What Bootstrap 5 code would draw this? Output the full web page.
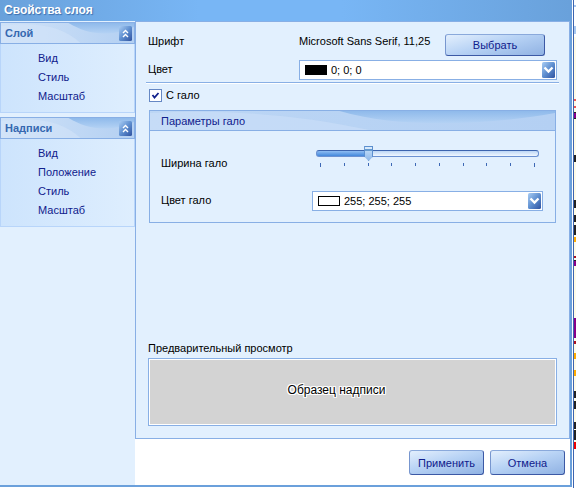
<!DOCTYPE html>
<html lang="ru">
<head>
<meta charset="utf-8">
<meta name="viewport" content="width=device-width, initial-scale=1">
<title>Свойства слоя</title>
<link href="https://cdn.jsdelivr.net/npm/bootstrap@5.3.0/dist/css/bootstrap.min.css" rel="stylesheet">
<style>
:root{--line:#88afe5;--frame:#6ba0db;--panel:#e2f0fe;--navy:#10208c}
body{font-family:"Liberation Sans",Arial,sans-serif;font-size:11px;line-height:19px;color:#000;background:#fff}
.dialog{border-right:2px solid var(--frame);border-bottom:2px solid var(--frame);margin-bottom:1px;min-width:0}
.titlebar{height:21px;background:linear-gradient(90deg,#69a1db,#78b6f5 35%,#78b6f5 60%,#69a1db);color:#fff;font-size:12px;font-weight:bold;padding-left:4px;text-shadow:1px 1px 1px #3d6fae}
.side{width:135px;background:var(--panel);padding-top:1px}
.group{border:1px solid #b8d5fa;background:linear-gradient(90deg,#cde4fd,#deeefe);margin-bottom:4px}
.cap{position:relative;height:22px;margin:-1px -1px 0;border:1px solid var(--line);background:linear-gradient(90deg,#cfe2f8,#b4d0f2);padding-left:4px}
.cap h2{font-size:11px;line-height:20px;font-weight:bold;color:#3568b0;margin:0;position:relative}
.wave{position:absolute;left:0;top:0;width:100%;height:100%}
.fold{position:relative;border:0;background:none;padding:0;margin-right:2px;width:13px;height:15px;display:flex}
.items{padding:5px 0 6px 37px}
.items a{color:var(--navy);text-decoration:none;display:block}
.content{background:var(--panel);border:1px solid var(--line);padding:10px 12px 12px}
.split{display:grid;grid-template-columns:151px 1fr;align-items:start}
.cmd{height:25px;padding:0;border:1px solid #3c59a5;border-top-color:#8aa9db;border-left-color:#7796cf;border-radius:3px;background:linear-gradient(165deg,#e3effd,#b8d3f5 45%,#90b2e3);color:var(--navy);font-size:11px;line-height:20px;width:75px}
.cmd:hover{color:var(--navy);border-color:#3c59a5}
.pick{width:100px;height:22px;margin:2px 12px 0 0}
.combo{position:relative}
.combo select{display:block;width:100%;height:20px;border:1px solid var(--line);background:#fff;appearance:none;padding:0 20px 0 31px;border-radius:0;color:#000;font-size:11px;line-height:18px}
.swatch{position:absolute;left:6px;top:5px;width:22px;height:10px;border:1px solid #000;pointer-events:none}
.black{background:#000}.white{background:#fff}
.drop{position:absolute;right:2px;top:2px;pointer-events:none}
.rule{height:2px;background:var(--line);border-bottom:1px solid #fff;margin:2px -2px 0}
.glow-row{margin:2px 1px 0}
.check{width:13px;height:13px;margin:0;border:1px solid #6688c4;border-radius:0;background:#fff;appearance:none;display:block;grid-area:1/1}
.tick{grid-area:1/1;visibility:hidden;pointer-events:none}
.check:checked+.tick{visibility:visible}
.box{border:1px solid var(--line);margin:5px 1px 0}
.boxcap{position:relative;height:20px;border-bottom:1px solid var(--line);background:linear-gradient(90deg,#bcd6f5,#b4d0f3);padding-left:11px;color:var(--navy)}
.boxcap h3{font-size:11px;line-height:20px;margin:0;position:relative;font-weight:normal}
.boxbody{display:grid;gap:18px;padding:15px 12px 11px 11px}
.low{padding-top:8px}
.halo{appearance:none;display:block;width:100%;height:15px;margin:0;background:none}
.halo::-webkit-slider-runnable-track{height:7px;border:1px solid #6b91d2;border-top-color:#3c64ae;border-radius:3px;background:linear-gradient(#8fbdf3,#4388db) 0/23% 100% no-repeat,linear-gradient(#bdd7f6,#f0f7ff)}
.halo::-webkit-slider-thumb{appearance:none;width:9px;height:15px;margin-top:-5px;background:linear-gradient(#d8eafc 2px,#659acf 2px,#659acf 4px,#b9d7f7 4px,#8fb8e9);border:1px solid #5c8fce;clip-path:polygon(0 0,100% 0,100% 70%,50% 100%,0 70%)}
.marks{display:flex;justify-content:space-between;padding:0 4px;margin-top:2px}
.marks i{width:1px;height:3px;background:#3d68b5}
.marks i:first-child,.marks i:last-child{height:4px}
.preview{border:1px solid var(--line);background:#d3d3d3;box-shadow:inset 0 0 0 1px #fff;height:68px;font-size:12px;padding:0 32px 4px 0}
.preview span{text-shadow:1px 0 #fff,-1px 0 #fff,0 1px #fff,0 -1px #fff,1px 1px #fff,-1px -1px #fff,1px -1px #fff,-1px 1px #fff}
.foot{background:#fff;padding:11px 5px 10px;gap:6px}
.sliver{width:4px}
</style>
<script src="https://cdn.jsdelivr.net/npm/bootstrap@5.3.0/dist/js/bootstrap.bundle.min.js"></script>
</head>
<body>
<svg width="0" height="0" class="position-absolute" aria-hidden="true">
<defs>
<linearGradient id="bt" x1="0" y1="0" x2="1" y2="1"><stop offset="0" stop-color="#a9cdf4"/><stop offset=".5" stop-color="#5f8fd0"/><stop offset="1" stop-color="#2f52a0"/></linearGradient>
<linearGradient id="wv" x1="0" y1="0" x2="0" y2="1"><stop offset="0" stop-color="#8fbaeb"/><stop offset="1" stop-color="#b4d2f4"/></linearGradient>
<symbol id="arrow" viewBox="0 0 13 16"><rect width="13" height="16" rx="1.5" fill="url(#bt)"/><path d="M2.500 5.500l4 4 4-4" fill="none" stroke="#fff" stroke-width="2.400"/></symbol>
<symbol id="chev" viewBox="0 0 13 15"><rect width="13" height="15" rx="1.500" fill="url(#bt)"/><path d="M4 7l2.500-2.500L9 7M4 11l2.500-2.500L9 11" fill="none" stroke="#fff" stroke-width="1.400"/></symbol>
<symbol id="curve" viewBox="0 0 134 20" preserveAspectRatio="none"><path d="M68 0C86 11 109 15 134 4V0Z" fill="url(#wv)"/><path d="M0 3C35-2 62 3 80 20H0Z" fill="#d5e6fa" opacity=".5"/></symbol>
</defs>
</svg>
<div class="d-flex min-vh-100">
<div class="dialog d-flex flex-column flex-grow-1">
  <h1 class="titlebar mb-0 lh-sm d-flex align-items-center">Свойства слоя</h1>
  <div class="d-flex flex-grow-1">
    <nav class="side flex-shrink-0" aria-label="Разделы">
      <section class="group">
        <div class="cap d-flex justify-content-between align-items-center"><svg class="wave"><use href="#curve"/></svg><h2>Слой</h2><button class="fold" type="button" aria-label="Свернуть"><svg width="13" height="15"><use href="#chev"/></svg></button></div>
        <div class="items"><a href="#">Вид</a><a href="#">Стиль</a><a href="#">Масштаб</a></div>
      </section>
      <section class="group">
        <div class="cap d-flex justify-content-between align-items-center"><svg class="wave"><use href="#curve"/></svg><h2>Надписи</h2><button class="fold" type="button" aria-label="Свернуть"><svg width="13" height="15"><use href="#chev"/></svg></button></div>
        <div class="items"><a href="#">Вид</a><a href="#">Положение</a><a href="#">Стиль</a><a href="#">Масштаб</a></div>
      </section>
    </nav>
    <form class="d-flex flex-column flex-grow-1">
      <div class="content d-flex flex-column flex-grow-1">
        <div class="split"><span>Шрифт</span><div class="d-flex justify-content-between align-items-start"><span>Microsoft Sans Serif, 11,25</span><button class="btn cmd pick" type="button">Выбрать</button></div></div>
        <div class="split mt-1"><label for="color">Цвет</label><div class="combo"><select id="color"><option>0; 0; 0</option></select><span class="swatch black"></span><svg class="drop" width="13" height="16"><use href="#arrow"/></svg></div></div>
        <div class="rule"></div>
        <div class="glow-row d-flex align-items-center">
          <div class="d-grid"><input class="check" type="checkbox" id="glow" checked><svg class="tick" width="13" height="13"><path d="M3.500 6l2 2.500L9.500 4" fill="none" stroke="#10208c" stroke-width="1.800"/></svg></div>
          <label class="ps-1" for="glow">С гало</label>
        </div>
        <section class="box">
          <div class="boxcap"><svg class="wave" viewBox="0 0 406 19" preserveAspectRatio="none"><path d="M0 2C80-2 150 4 220 19H0Z" fill="#cfe2f9" opacity=".5"/><path d="M190 0C250 18 340 14 406 2V0Z" fill="url(#wv)"/></svg><h3>Параметры гало</h3></div>
          <div class="boxbody">
            <div class="split"><label class="low" for="width">Ширина гало</label><div class="px-1"><input class="halo" id="width" type="range" min="0" max="9" value="2"><div class="marks"><i></i><i></i><i></i><i></i><i></i><i></i><i></i><i></i><i></i><i></i></div></div></div>
            <div class="split"><label for="hcolor">Цвет гало</label><div class="combo"><select id="hcolor"><option>255; 255; 255</option></select><span class="swatch white"></span><svg class="drop" width="13" height="16"><use href="#arrow"/></svg></div></div>
          </div>
        </section>
        <div class="mt-auto">Предварительный просмотр</div>
        <div class="preview d-flex align-items-center justify-content-center"><span>Образец надписи</span></div>
      </div>
      <div class="foot d-flex justify-content-end"><button class="btn cmd" type="button">Применить</button><button class="btn cmd" type="button">Отмена</button></div>
    </form>
  </div>
</div>
<svg class="sliver flex-shrink-0" viewBox="0 0 4 488" preserveAspectRatio="none" height="488" aria-hidden="true">
<path fill="#fff" d="M0 0h4v488H0z"/><path fill="#fffbe6" d="M2 37h2v412H2z"/>
<path fill="#a9c8ef" d="M2 5h2v2H2zM2 26h2v8H2z"/><path fill="#e55" d="M2 99h2v2H2zM2 106h2v2H2z"/>
<path fill="#808" d="M2 113h2v5H2zM2 261h2v5H2zM2 318h2v20H2z"/>
<path fill="#222" d="M2 112h2v1H2zM2 118h2v1H2zM2 155h2v7H2zM2 200h2v8H2zM2 215h2v7H2zM2 225h2v10H2zM2 260h2v1H2zM2 391h2v7H2zM2 401h2v8H2zM2 422h2v7H2zM2 430h2v10H2z"/>
<path fill="#fa0" d="M2 237h2v5H2zM2 353h2v6H2zM2 370h2v6H2z"/><path fill="#a12" d="M2 256h2v2H2zM2 341h2v3H2z"/><path fill="#e00" d="M2 442h2v7H2z"/>
<path fill="#3d65b0" d="M1 0h1v488H1z"/></svg>
</div>
</body>
</html>
